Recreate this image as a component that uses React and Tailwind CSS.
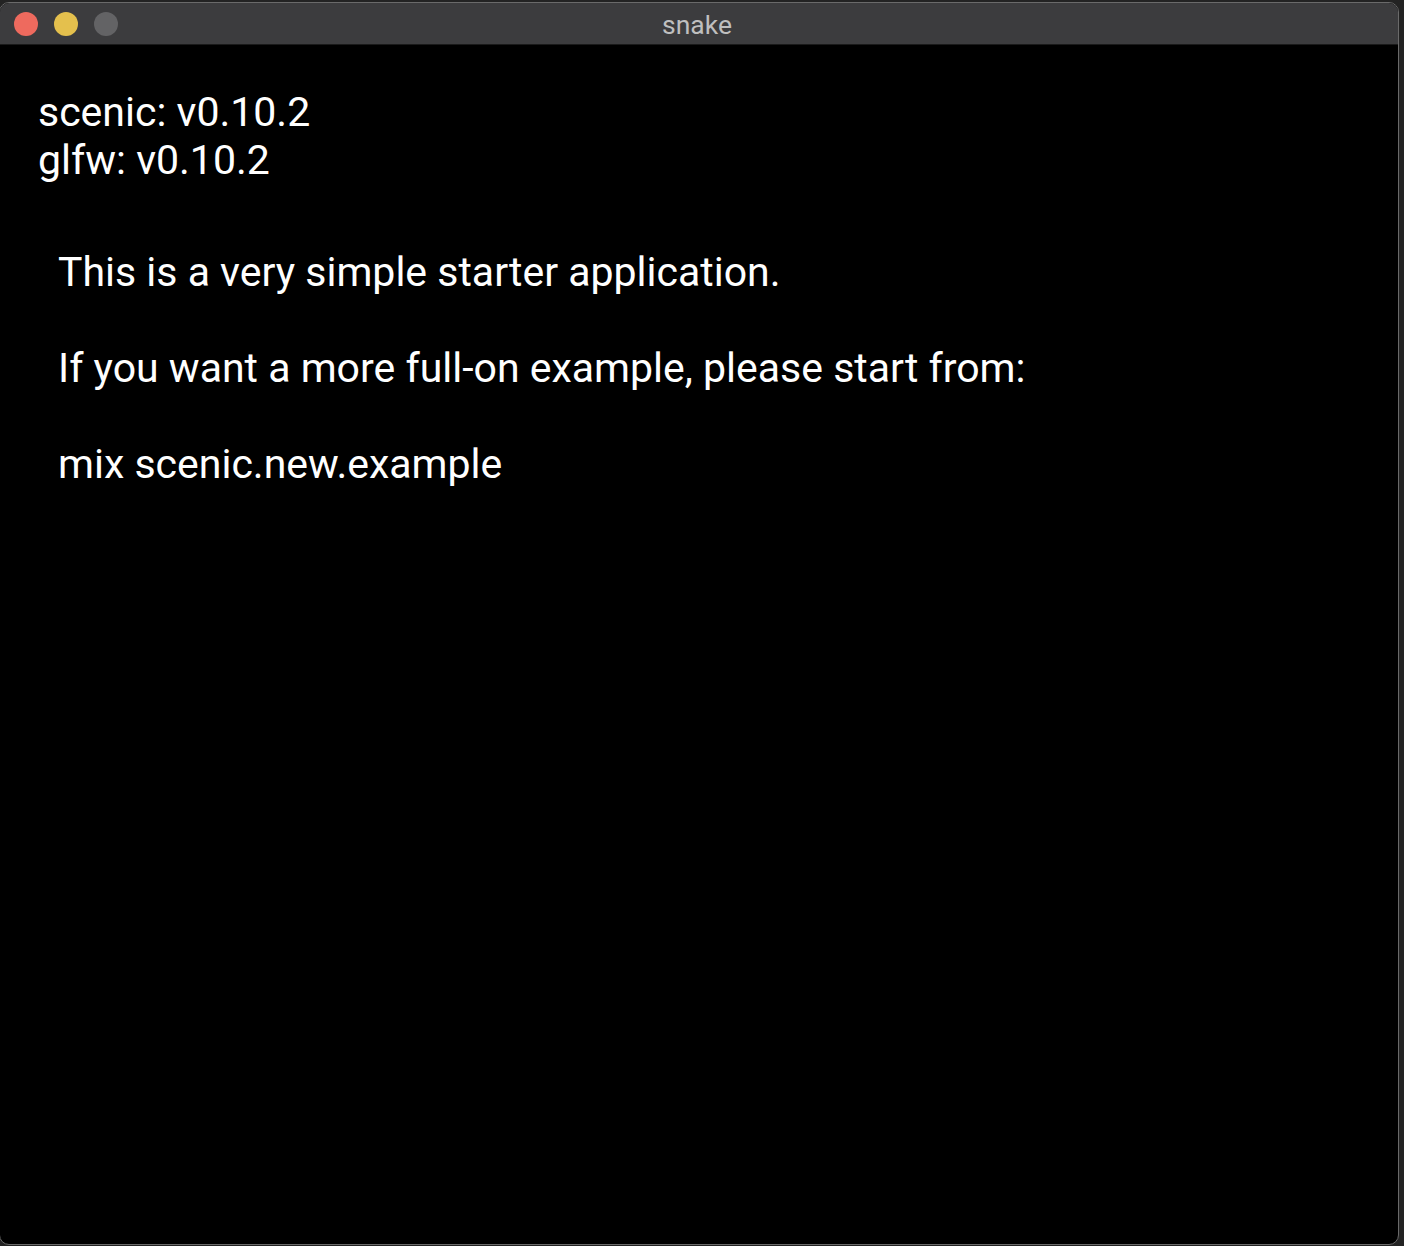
export default function App() {
  return (
    <div className="w-[1404px] h-[1246px] bg-[#232323] pt-[2px] pr-[5px] pb-[1px] overflow-hidden">
      <div className="-ml-px h-full rounded-[10px] border border-[#6a6a6a] bg-black overflow-hidden flex flex-col">
        <div className="h-[42px] shrink-0 bg-[#3c3c3e] border-b border-[#1a1a1a] relative flex items-center">
          <div className="flex items-center gap-[16px] pl-[14px]">
            <div className="w-[24px] h-[24px] rounded-full bg-[#ee6a5e]" />
            <div className="w-[24px] h-[24px] rounded-full bg-[#e4c04d]" />
            <div className="w-[24px] h-[24px] rounded-full bg-[#636365]" />
          </div>
          <div className="absolute inset-0 flex items-center justify-center pr-[4px] pt-[2px] text-[26.5px] text-[#bfbfbf]" style={{ fontFamily: 'Roboto, "Noto Sans", sans-serif' }}>
            snake
          </div>
        </div>
        <div className="flex-1 pl-[38px] pt-[43px] text-white text-[41px] leading-[48px]" style={{ fontFamily: 'Roboto, "Noto Sans", sans-serif' }}>
          <div>
            <div>scenic: v0.10.2</div>
            <div>glfw: v0.10.2</div>
          </div>
          <div className="mt-[64px] ml-[20px]">
            <div>This is a very simple starter application.</div>
            <div className="h-[48px]" />
            <div>If you want a more full-on example, please start from:</div>
            <div className="h-[48px]" />
            <div>mix scenic.new.example</div>
          </div>
        </div>
      </div>
    </div>
  );
}
